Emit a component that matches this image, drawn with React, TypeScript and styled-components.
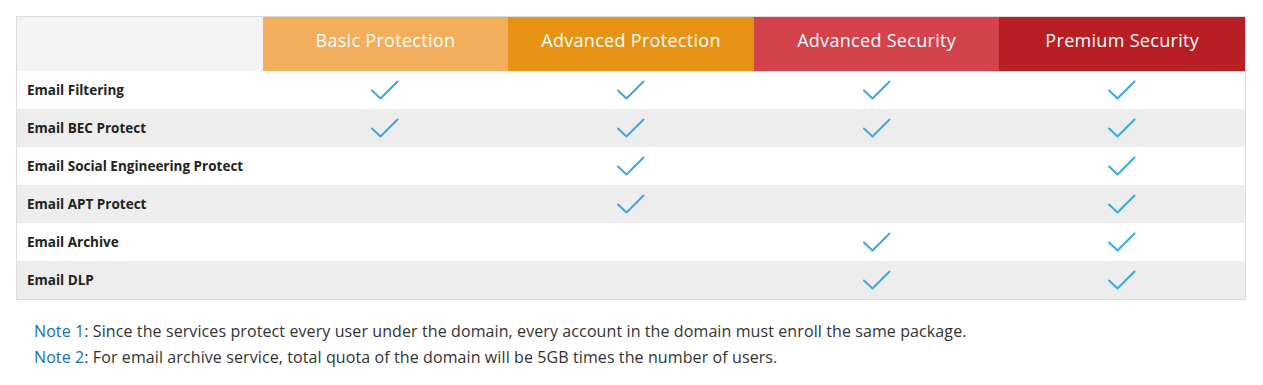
import React from "react";
import styled, { createGlobalStyle } from "styled-components";

const Global = createGlobalStyle`
  html, body { margin: 0; padding: 0; background: #fff; }
  body { font-family: "Open Sans", "Noto Sans", sans-serif; color: #333; }
`;

const Page = styled.div`
  padding: 16px 17px 0 16px;
`;

const Table = styled.div`
  border: 1px solid #dcdcdc;
  display: grid;
  grid-template-columns: repeat(5, 1fr);
`;

const HeadCell = styled.div<{ $bg: string }>`
  background: ${(p) => p.$bg};
  height: 54px;
  box-sizing: border-box;
  padding-bottom: 9px;
  display: flex;
  align-items: center;
  justify-content: center;
  color: #fff;
  font-size: 18px;
  letter-spacing: 0.3px;
  font-family: "Open Sans", sans-serif;
  font-weight: 500;
`;

const Row = styled.div<{ $alt: boolean }>`
  display: contents;
  & > div { background: ${(p) => (p.$alt ? "#ededed" : "#ffffff")}; }
`;

const Label = styled.div`
  height: 38px;
  display: flex;
  align-items: center;
  padding-left: 10px;
  font-size: 13.5px;
  font-weight: 700;
  color: #222;
`;

const Cell = styled.div`
  height: 38px;
  display: flex;
  align-items: center;
  justify-content: center;
`;

const Notes = styled.div`
  padding: 18px 0 0 18px;
  font-size: 16px;
  letter-spacing: 0.1px;
  line-height: 26px;
  color: #333;
`;

const NoteTag = styled.span`
  color: #1b6fae;
`;

const Check = () => (
  <svg width="28" height="20" viewBox="0 0 28 20" fill="none">
    <path d="M1 10.5 L9.5 18.5 L26.5 1.5" stroke="#3aa9e0" strokeWidth="2" strokeLinecap="round" strokeLinejoin="round" />
  </svg>
);

const headers = [
  { t: "Basic Protection", c: "#f2ae5b" },
  { t: "Advanced Protection", c: "#e69315" },
  { t: "Advanced Security", c: "#d4424c" },
  { t: "Premium Security", c: "#b71f24" },
];

const rows: [string, boolean[]][] = [
  ["Email Filtering", [true, true, true, true]],
  ["Email BEC Protect", [true, true, true, true]],
  ["Email Social Engineering Protect", [false, true, false, true]],
  ["Email APT Protect", [false, true, false, true]],
  ["Email Archive", [false, false, true, true]],
  ["Email DLP", [false, false, true, true]],
];

export default function App() {
  return (
    <Page>
      <Global />
      <Table>
        <HeadCell $bg="#f4f4f4" />
        {headers.map((h) => (
          <HeadCell key={h.t} $bg={h.c}>{h.t}</HeadCell>
        ))}
        {rows.map(([label, vals], i) => (
          <Row key={label} $alt={i % 2 === 1}>
            <Label>{label}</Label>
            {vals.map((v, j) => (
              <Cell key={j}>{v ? <Check /> : null}</Cell>
            ))}
          </Row>
        ))}
      </Table>
      <Notes>
        <div><NoteTag>Note 1</NoteTag>: Since the services protect every user under the domain, every account in the domain must enroll the same package.</div>
        <div><NoteTag>Note 2</NoteTag>: For email archive service, total quota of the domain will be 5GB times the number of users.</div>
      </Notes>
    </Page>
  );
}
